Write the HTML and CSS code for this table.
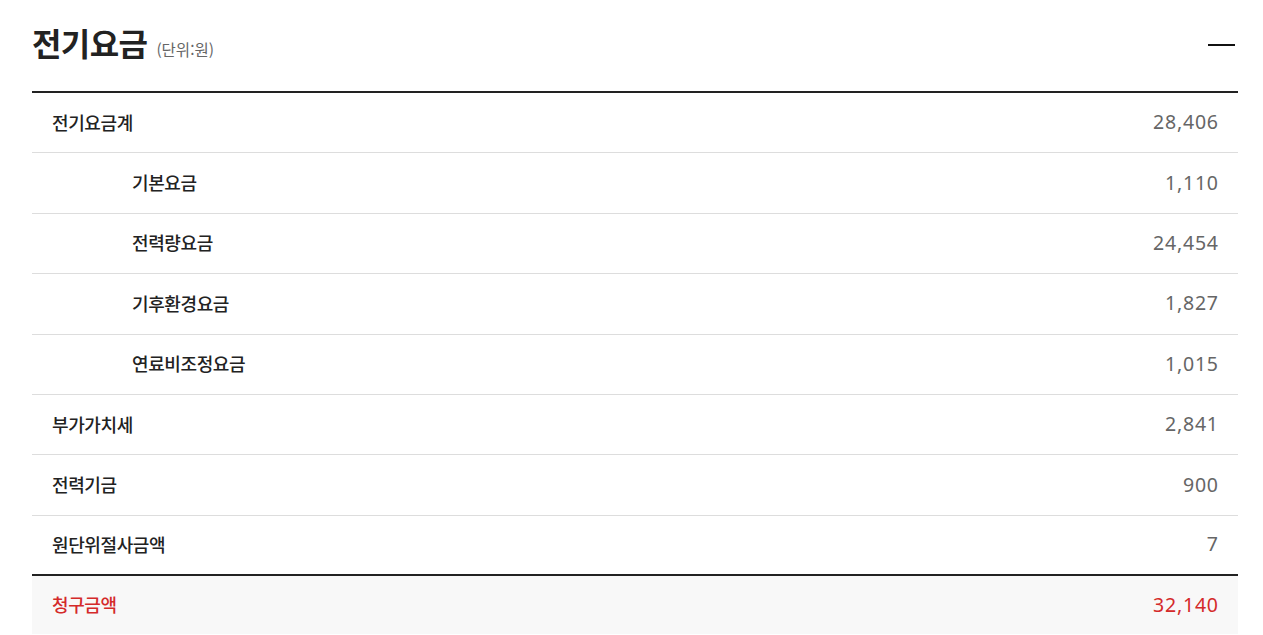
FILE: index.html
```html
<!DOCTYPE html>
<html lang="ko">
<head>
<meta charset="utf-8">
<link rel="stylesheet" href="styles.css">
</head>
<body>
<div class="wrap">
  <div class="head">
    <h2 class="title">전기요금 <span class="unit">(단위:원)</span></h2>
    <span class="minus"></span>
  </div>
  <div class="table">
    <div class="row"><span class="label">전기요금계</span><span class="val">28,406</span></div>
    <div class="row sub"><span class="label">기본요금</span><span class="val">1,110</span></div>
    <div class="row sub"><span class="label">전력량요금</span><span class="val">24,454</span></div>
    <div class="row sub"><span class="label">기후환경요금</span><span class="val">1,827</span></div>
    <div class="row sub"><span class="label">연료비조정요금</span><span class="val">1,015</span></div>
    <div class="row"><span class="label">부가가치세</span><span class="val">2,841</span></div>
    <div class="row"><span class="label">전력기금</span><span class="val">900</span></div>
    <div class="row last"><span class="label">원단위절사금액</span><span class="val">7</span></div>
    <div class="row total"><span class="label">청구금액</span><span class="val">32,140</span></div>
  </div>
</div>
</body>
</html>
```
FILE: styles.css
```css
html, body { margin: 0; padding: 0; background: #fff; }
body { font-family: "Noto Sans CJK KR", "Noto Sans", sans-serif; color: #222; }
.wrap { padding: 0 25px 0 32px; }
.head { display: flex; align-items: center; justify-content: space-between; height: 91px; }
.title { margin: 0; font-size: 32px; font-weight: 700; color: #222; letter-spacing: -0.6px; display: flex; align-items: baseline; gap: 9px; margin-top: -8px; }
.unit { font-size: 15.5px; font-weight: 400; color: #666; letter-spacing: 0; }
.minus { width: 27px; height: 2px; background: #111; margin-right: 3px; margin-top: -2px; }
.table { border-top: 2px solid #222; }
.row { display: flex; justify-content: space-between; align-items: center; box-sizing: border-box; height: 60.4px; padding: 0 20px 2px; border-bottom: 1px solid #ddd; }
.row.last { border-bottom: 2px solid #222; }
.label { font-size: 18px; font-weight: 500; color: #222; letter-spacing: -0.4px; }
.sub .label { padding-left: 80px; }
.val { font-size: 19.5px; font-weight: 400; color: #666; font-family: "Noto Sans", sans-serif; letter-spacing: 0.8px; margin-right: -0.8px; }
.total { background: #f8f8f8; border-bottom: none; height: 58px; }
.total .label, .total .val { color: #d42a2a; }
```
